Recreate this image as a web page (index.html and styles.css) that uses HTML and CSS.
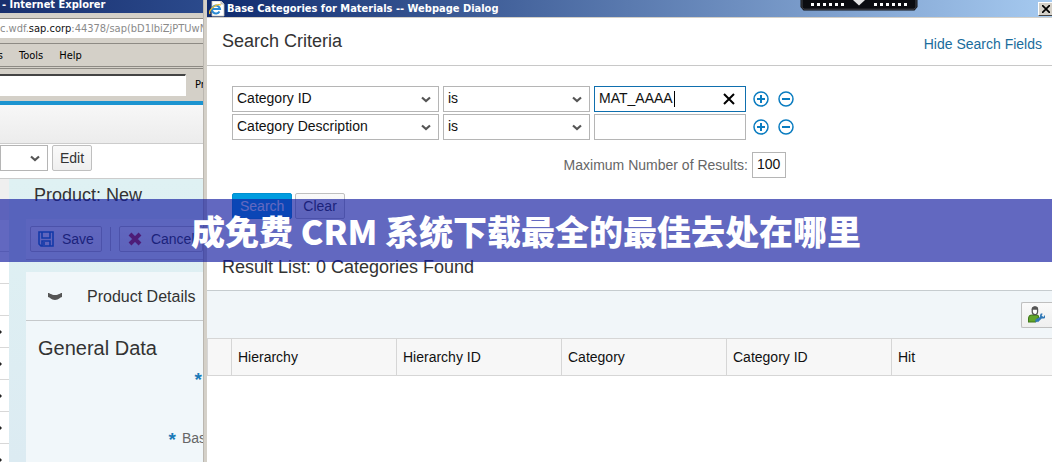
FILE: index.html
```html
<!DOCTYPE html>
<html lang="en">
<head>
<meta charset="utf-8">
<title>Base Categories for Materials</title>
<link rel="stylesheet" href="styles.css">
</head>
<body>
<svg class="symbols" aria-hidden="true">
  <symbol id="chevron" viewBox="0 0 10 7"><path d="M1 1.5 5 5l4-3.5" fill="none" stroke="#555" stroke-width="2.2"/></symbol>
  <symbol id="plus" viewBox="0 0 16 16"><circle cx="8" cy="8" r="7" fill="none" stroke="#0a7cc0" stroke-width="1.5"/><path d="M8 4v8M4 8h8" stroke="#0a7cc0" stroke-width="2"/></symbol>
  <symbol id="minus" viewBox="0 0 16 16"><circle cx="8" cy="8" r="7" fill="none" stroke="#0a7cc0" stroke-width="1.5"/><path d="M4 8h8" stroke="#0a7cc0" stroke-width="2"/></symbol>
</svg>
<div class="screen">
  <section class="browser">
    <div class="browser-title">- Internet Explorer</div>
    <div class="address-bar"><div class="address">c.wdf.<b>sap.corp</b>:44378/sap(bD1lbiZjPTUwN</div></div>
    <nav class="menu-bar"><span>s</span><span>Tools</span><span>Help</span></nav>
    <div class="find-bar"><input class="find-input" type="text" aria-label="Find"><span>Previous</span></div>
    <div class="app-header"></div>
    <div class="edit-bar">
      <div class="select edit-select"><select aria-label="Layout"><option></option></select><svg class="chevron"><use href="#chevron"/></svg></div>
      <button class="button" type="button">Edit</button>
    </div>
    <div class="workspace">
      <ul class="side-nav">
        <li></li><li></li><li></li><li class="arrow"></li><li class="arrow"></li><li class="arrow"></li><li class="arrow"></li><li class="arrow"></li>
      </ul>
      <main class="product">
        <h1 class="product-title">Product: New</h1>
        <div class="product-tools">
          <button class="button tool" type="button"><svg class="tool-icon" viewBox="0 0 16 16"><path d="M1 1h14v14H3l-2-2z" fill="none" stroke="#1473b8" stroke-width="1.6"/><path d="M4 1v6h8V1M4 15v-5h8v5M6 11v3" fill="none" stroke="#1473b8" stroke-width="1.6"/></svg>Save</button>
          <span class="separator"></span>
          <button class="button tool" type="button"><svg class="tool-icon" viewBox="0 0 16 16"><path d="m3 3 10 10M13 3 3 13" stroke="#c0222e" stroke-width="4"/></svg>Cancel</button>
        </div>
        <section class="details">
          <h2 class="details-title"><svg class="fold" viewBox="0 0 14 8"><path d="M0 0c2 0 3 2 7 2s5-2 7-2v4c-2 0-3 3-7 3S2 4 0 4z" fill="#555"/></svg>Product Details</h2>
          <h3 class="general">General Data</h3>
          <div class="required"><b>*</b></div>
          <div class="required"><b>*</b><span class="required-label">Base</span></div>
        </section>
      </main>
    </div>
  </section>

  <section class="dialog">
    <header class="dialog-title">
      <svg class="page-icon" viewBox="0 0 16 16"><path d="M3 0h9l3 3v12H3z" fill="#fff" stroke="#c9c5b8" stroke-width=".8"/><path d="M12 0v3h3" fill="#ddd" stroke="#999" stroke-width=".6"/><path d="M10.500 10.500A4 4 0 1 1 11 8H4" fill="none" stroke="#2a8ad4" stroke-width="2"/><path d="M1 13C-1 10 6 2 12 4" fill="none" stroke="#e8b92c" stroke-width="1.300"/></svg>
      <span>Base Categories for Materials -- Webpage Dialog</span>
      <button class="close" type="button" aria-label="Close"><svg viewBox="0 0 8 8"><path d="m0 0 8 8M8 0 0 8" stroke="#000" stroke-width="1.700"/></svg></button>
      <svg class="grip" viewBox="0 0 118 11"><path d="M.5 0v7l3 3.500h111l3-3.500V0z" fill="#0b0c10"/><path d="M2 0v7.500l2 1.700h110l2-1.700V0" fill="none" stroke="#44464c"/><path d="M11 4.500h34M74 4.500h34" stroke="#fff" stroke-width="3" stroke-dasharray="3 3"/><path d="M53 0h12l-6 5.500z" fill="#e4e4e4"/></svg>
    </header>
    <div class="criteria-head"><h2>Search Criteria</h2><a href="#">Hide Search Fields</a></div>
    <form class="criteria">
      <div class="row">
        <div class="select field"><select aria-label="Field"><option>Category ID</option></select><svg class="chevron"><use href="#chevron"/></svg></div>
        <div class="select operator"><select aria-label="Operator"><option>is</option></select><svg class="chevron"><use href="#chevron"/></svg></div>
        <div class="value active"><input type="text" value="MAT_AAAA" aria-label="Category ID value"><span class="caret"></span><button class="wipe" type="button" aria-label="Clear value"><svg viewBox="0 0 12 12"><path d="m1 1 10 10M11 1 1 11" stroke="#000" stroke-width="2"/></svg></button></div>
        <div class="row-actions"><button type="button" aria-label="Add"><svg><use href="#plus"/></svg></button><button type="button" aria-label="Remove"><svg><use href="#minus"/></svg></button></div>
      </div>
      <div class="row">
        <div class="select field"><select aria-label="Field"><option>Category Description</option></select><svg class="chevron"><use href="#chevron"/></svg></div>
        <div class="select operator"><select aria-label="Operator"><option>is</option></select><svg class="chevron"><use href="#chevron"/></svg></div>
        <div class="value"><input type="text" aria-label="Category Description value"></div>
        <div class="row-actions"><button type="button" aria-label="Add"><svg><use href="#plus"/></svg></button><button type="button" aria-label="Remove"><svg><use href="#minus"/></svg></button></div>
      </div>
      <div class="limit"><label for="max">Maximum Number of Results:</label><input id="max" type="text" value="100"></div>
      <div class="actions"><button class="button primary" type="button">Search</button><button class="button" type="button">Clear</button></div>
    </form>
    <h2 class="result-title">Result List: 0 Categories Found</h2>
    <div class="result-tools">
      <button class="button personalize" type="button" aria-label="Personalize"><svg viewBox="0 0 16 16"><path d="M.5 15v-3C.5 9.500 2 8.500 4 8.500h4c1 0 2 1 2 2L7 15z" fill="#62a52b" stroke="#3e7717"/><path d="M4 3c0-3 5-3 5 0v2.500C9 9 4 9 4 5.500z" fill="#fff" stroke="#555" stroke-width="1.200"/><path d="M3.500 3.500c0-4 6-4 6 0z" fill="#555"/><path d="m8.500 14.500 5-5" stroke="#3279b7" stroke-width="2.400"/><path d="M13.500 7.500c-2 0-2 3 0 3.500s2.500-1 2-2M10.500 12.500c-2-1-3.500 1-2.500 2.500" fill="none" stroke="#3279b7" stroke-width="1.500"/></svg></button>
    </div>
    <table class="results">
      <colgroup><col class="mark"><col class="wide"><col class="wide"><col class="wide"><col class="wide"><col></colgroup>
      <thead><tr><th></th><th>Hierarchy</th><th>Hierarchy ID</th><th>Category</th><th>Category ID</th><th>Hit</th></tr></thead>
    </table>
  </section>
  <div class="banner" lang="zh">成免费 CRM 系统下载最全的最佳去处在哪里</div>
</div>
</body>
</html>
```
FILE: styles.css
```css
* { box-sizing: border-box; }
body { margin: 0; font: 14px/20px "Liberation Sans", Arial, sans-serif; color: #333; background: #fff; }
h1, h2, h3, ul { margin: 0; padding: 0; font-weight: normal; }
button, input, select { font: inherit; color: inherit; margin: 0; }
.symbols { position: absolute; width: 0; height: 0; }
.screen { position: relative; display: flex; height: 100vh; overflow: hidden; }

.button { height: 26px; padding: 0 7px; border: 1px solid #bfbfbf; border-radius: 2px; background: linear-gradient(#fafafa, #efefef); }
.select { position: relative; height: 26px; }
.select select { appearance: none; width: 100%; height: 100%; padding: 0 4px 2px; border: 1px solid #b5b5b5; border-radius: 0; background: #fff; color: #111; }
.chevron { position: absolute; right: 8px; top: 10px; width: 10px; height: 7px; pointer-events: none; }

/* Browser window behind the dialog */
.browser { flex: 0 0 204px; display: flex; flex-direction: column; overflow: hidden; border-right: 1px solid #bbb7b0; white-space: nowrap; }
.browser-title, .address, .menu-bar, .find-bar, .dialog-title { font-family: "DejaVu Sans Condensed", Tahoma, sans-serif; font-size: 11px; }
.browser-title { height: 13px; padding-left: 2px; background: linear-gradient(90deg, #182f6e, #2b4a8c); color: #fff; font-weight: bold; line-height: 10px; }
.address-bar { height: 31px; padding: 5px 0; background: #d4d0c8; border-bottom: 1px solid #8d8a84; }
.address { height: 20px; overflow: hidden; background: #fff; border-top: 1px solid #8d8a84; color: #8a8a8a; line-height: 20px; }
.address b { color: #111; font-weight: normal; }
.menu-bar { display: flex; gap: 16px; height: 25px; background: #d4d0c8; border-bottom: 3px double #8d8a84; color: #000; line-height: 24px; }
.menu-bar span:first-child { width: 3px; display: flex; justify-content: flex-end; }
.find-bar { display: flex; align-items: center; gap: 9px; height: 32px; background: #d4d0c8; color: #000; }
.find-input { width: 186px; flex: none; height: 22px; border: 1px solid #fff; border-top: 2px solid #444; border-left: 0; background: #fff; }
.app-header { height: 43px; border-top: 4px solid #1c94d0; border-bottom: 1px solid #ccc; background: linear-gradient(#f7f7f7, #ececec); }
.edit-bar { display: flex; align-items: center; gap: 4px; height: 35px; padding-bottom: 6px; border-bottom: 1px solid #ccc; }
.edit-select { width: 48px; }
.workspace { display: flex; flex: 1; min-height: 0; }
.side-nav { flex: 0 0 9px; padding-top: 41px; list-style: none; background: linear-gradient(#efefef 41px, #fff 41px); overflow: hidden; }
.side-nav li { height: 32px; border-bottom: 1px solid #d8d8d8; display: flex; align-items: center; }
.arrow::before { content: ""; border: 2px solid transparent; border-left-color: #222; border-right: 0; }
.product { flex: 1; min-width: 0; background: linear-gradient(#dff1f3, #dcebf2); }
.product-title { height: 40px; padding: 6px 25px; font-size: 18px; line-height: 20px; }
.product-tools { display: flex; align-items: center; gap: 8px; height: 41px; margin-left: 17px; padding-left: 4px; background: #edf5f8; border-bottom: 1px solid #ccc; }
.tool { display: flex; align-items: center; gap: 8px; padding: 0 7px; flex: none; }
.tool-icon { width: 16px; height: 16px; }
.separator { width: 1px; height: 24px; background: #bbb; }
.details { height: 100%; margin: 12px 0 0 17px; background: #f1f7fa; }
.details-title { display: flex; align-items: center; gap: 25px; height: 49px; padding: 2px 0 0 22px; border-bottom: 1px solid #c6c9cb; font-size: 16px; }
.fold { width: 14px; height: 8px; flex: none; }
.general { padding: 15px 12px 4px; font-size: 20px; line-height: 24px; }
.required { display: flex; justify-content: flex-end; gap: 6px; height: 60px; color: #666; padding-top: 4px; padding-right: 1px; }
.required b { color: #1b7bb8; font-size: 19px; line-height: 24px; }
.required-label { width: 20px; }

/* Dialog */
.dialog { position: relative; flex: 1; min-width: 0; border-left: 3px solid #d4d0c8; background: #fff; }
.dialog-title { position: relative; display: flex; align-items: center; gap: 2px; height: 18px; padding-left: 2px; border-bottom: 1px solid #d4d0c8; background: linear-gradient(90deg, #0e2a6e, #a6caf0); color: #fff; font-weight: bold; line-height: 16px; overflow: hidden; white-space: nowrap; }
.page-icon { width: 16px; height: 16px; flex: none; }
.close { display: flex; align-items: center; width: 14px; height: 14px; margin-left: auto; padding: 0 3px; border: 1px solid #fff; border-right: 0; border-bottom-color: #444; background: #d4d0c8; }
.close svg { width: 8px; height: 8px; flex: none; }
.grip { position: absolute; right: 134px; top: 0; width: 118px; height: 11px; }
.criteria-head { display: flex; justify-content: space-between; align-items: center; height: 48px; padding: 0 10px 2px 15px; border-bottom: 1px solid #c8c8c8; }
.criteria-head h2, .result-title { font-size: 18px; line-height: 20px; }
.criteria-head a { color: #1a6c9c; text-decoration: none; padding-top: 6px; }
.criteria { padding: 20px 25px 0; }
.row { display: flex; gap: 4px; margin-bottom: 2px; }
.field { width: 207px; }
.operator { width: 147px; }
.value { position: relative; width: 152px; height: 26px; }
.value input { width: 100%; height: 100%; padding: 0 4px 2px; border: 1px solid #b5b5b5; color: #111; outline: 0; }
.value.active input { border-color: #0f6fae; }
.caret { position: absolute; left: 80px; top: 5px; width: 1px; height: 16px; background: #000; }
.wipe { position: absolute; right: 11px; top: 7px; width: 12px; height: 12px; padding: 0; border: 0; background: none; }
.wipe svg { display: block; width: 12px; height: 12px; }
.row-actions { display: flex; align-items: center; gap: 9px; padding-left: 3px; }
.row-actions button { width: 16px; height: 16px; padding: 0; border: 0; background: none; }
.row-actions svg { display: block; width: 16px; height: 16px; }
.limit { display: flex; justify-content: flex-end; align-items: center; gap: 4px; width: 554px; margin-top: 12px; color: #666; }
.limit input { width: 34px; height: 26px; padding: 0 4px 2px; border: 1px solid #b5b5b5; color: #111; }
.actions { display: flex; gap: 3px; margin-top: 15px; }
.primary { color: #fff; background: #009de0; border-color: #0090d0; }
.result-title { padding: 38px 15px 13px; }
.result-tools { display: flex; justify-content: flex-end; align-items: center; height: 48px; border-top: 1px solid #c6cccf; background: #f1f6f9; }
.personalize { width: 31px; padding: 0 0 0 6px; border-right: 0; border-radius: 2px 0 0 2px; }
.personalize svg { display: block; width: 17px; height: 17px; }
.results { width: 100%; table-layout: fixed; border-collapse: collapse; }
.mark { width: 24px; }
.wide { width: 165px; }
.results th { height: 37px; padding: 0 6px; border: 1px solid #d6d6d6; border-right: 0; background: #f7f7f7; color: #111; font-weight: normal; text-align: left; }

/* Headline strip */
.banner { position: absolute; left: 0; right: 0; top: 199px; height: 63px; background: rgba(17, 26, 159, .66); color: #fff; font: 900 34px/63px "Noto Sans CJK SC", sans-serif; text-align: center; white-space: nowrap; overflow: hidden; }
```
